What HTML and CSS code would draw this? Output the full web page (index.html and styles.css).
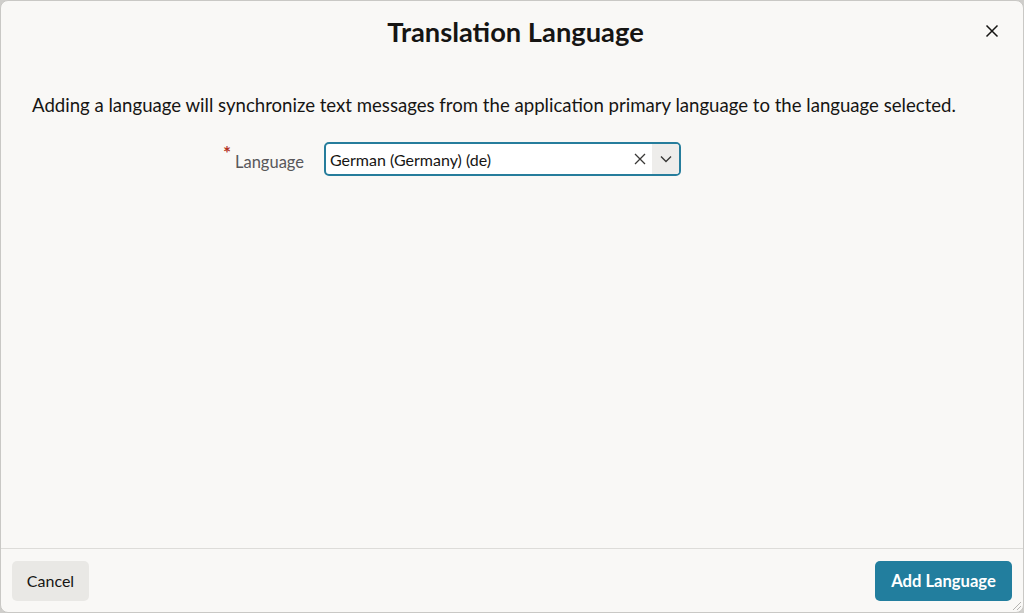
FILE: index.html
```html
<!DOCTYPE html>
<html lang="en">
<head>
<meta charset="utf-8">
<title>Translation Language</title>
<link rel="stylesheet" href="styles.css">
</head>
<body>
<div class="dialog">
  <header class="dlg-header">
    <span></span>
    <h1 class="dlg-title">Translation Language</h1>
    <button class="close-btn" aria-label="Close">
      <svg width="14" height="14" viewBox="0 0 14 14"><path d="M1.5 1.5 L12.5 12.5 M12.5 1.5 L1.5 12.5" stroke="#161513" stroke-width="1.5" fill="none"/></svg>
    </button>
  </header>
  <main class="dlg-body">
    <p class="desc">Adding a language will synchronize text messages from the application primary language to the language selected.</p>
    <div class="form-row">
      <label class="field-label"><span class="req">*</span>Language</label>
      <div class="select">
        <span class="select-value">German (Germany) (de)</span>
        <span class="clear-icon">
          <svg width="12" height="12" viewBox="0 0 12 12"><path d="M1 1 L11 11 M11 1 L1 11" stroke="#3a3937" stroke-width="1.3" fill="none"/></svg>
        </span>
        <span class="drop-btn">
          <svg width="12" height="8" viewBox="0 0 12 8"><path d="M1 1.5 L6 6.5 L11 1.5" stroke="#3a3937" stroke-width="1.4" fill="none"/></svg>
        </span>
      </div>
    </div>
  </main>
  <footer class="dlg-footer">
    <button class="btn btn-secondary">Cancel</button>
    <button class="btn btn-primary">Add Language</button>
  </footer>
  <span class="resize-grip"></span>
</div>
</body>
</html>
```

FILE: styles.css
```css
* { box-sizing: border-box; }
html, body {
  margin: 0;
  padding: 0;
  height: 100%;
  background: #cfcecb;
}
body {
  font-family: Lato, "Noto Sans", "Liberation Sans", sans-serif;
  color: #161513;
}
.dialog {
  position: relative;
  width: 1024px;
  height: 613px;
  background: #f9f8f6;
  border: 1px solid #c9c8c5;
  border-radius: 8px;
  display: flex;
  flex-direction: column;
  overflow: hidden;
}
.dlg-header {
  height: 60px;
  display: grid;
  grid-template-columns: 1fr auto 1fr;
  align-items: center;
  padding: 0 17px 0 24px;
}
.dlg-title {
  margin: 0;
  font-size: 27.3px;
  font-weight: 700;
  letter-spacing: 0;
}
.close-btn {
  justify-self: end;
  background: none;
  border: 0;
  padding: 6px;
  width: 28px;
  height: 28px;
  display: flex;
  align-items: center;
  justify-content: center;
  cursor: pointer;
}
.dlg-body {
  flex: 1;
  padding: 32px 31px 0 31px;
}
.desc {
  margin: 0;
  font-size: 18.6px;
  line-height: 24px;
  color: #161513;
}
.form-row {
  margin-top: 25px;
  display: flex;
  align-items: center;
  padding-left: 187px;
}
.field-label {
  width: 105px;
  text-align: right;
  font-size: 16.5px;
  color: #58575a;
  padding-right: 20px;
  position: relative;
  padding-top: 2px;
}
.req {
  color: #b3311e;
  font-size: 19px;
  font-weight: 700;
  position: relative;
  top: -8px;
  margin-right: 4px;
}
.select {
  width: 357px;
  height: 34px;
  border: 2px solid #267d9c;
  border-radius: 5px;
  background: #ffffff;
  display: flex;
  align-items: stretch;
  overflow: hidden;
}
.select-value {
  flex: 1;
  display: flex;
  align-items: center;
  padding-left: 4px;
  font-size: 16px;
  color: #161513;
}
.clear-icon {
  width: 24px;
  display: flex;
  align-items: center;
  justify-content: center;
}
.drop-btn {
  width: 27px;
  background: #eeedeb;
  display: flex;
  align-items: center;
  justify-content: center;
}
.dlg-footer {
  height: 64px;
  border-top: 1px solid #dddcd9;
  display: flex;
  justify-content: space-between;
  align-items: center;
  padding: 0 11px;
}
.btn {
  height: 40px;
  border: 0;
  border-radius: 5px;
  font-family: inherit;
  font-size: 16px;
  padding: 0 14px;
  cursor: pointer;
}
.btn-secondary {
  width: 77px;
  background: #e9e8e5;
  color: #161513;
}
.btn-primary {
  width: 137px;
  background: #227e9e;
  color: #ffffff;
  font-weight: 700;
  font-size: 16.6px;
}
.resize-grip {
  position: absolute;
  right: 2px;
  bottom: 2px;
  width: 8px;
  height: 8px;
  background: linear-gradient(135deg, transparent 45%, #b5b4b1 45%, #b5b4b1 55%, transparent 55%, transparent 70%, #b5b4b1 70%, #b5b4b1 80%, transparent 80%);
}
```
